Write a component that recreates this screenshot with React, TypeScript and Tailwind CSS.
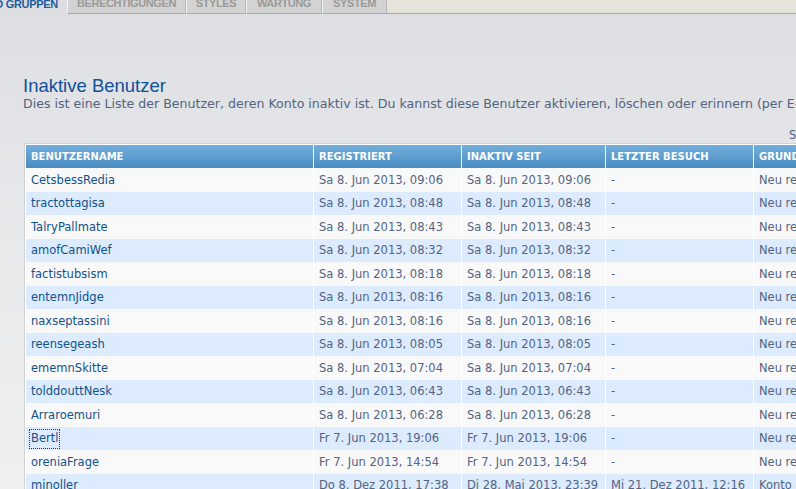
import React from "react";

type Row = {
  name: string;
  registered: string;
  inactive: string;
  lastVisit: string;
  reason: string;
};

const rows: Row[] = [
  { name: "CetsbessRedia", registered: "Sa 8. Jun 2013, 09:06", inactive: "Sa 8. Jun 2013, 09:06", lastVisit: "-", reason: "Neu registriert" },
  { name: "tractottagisa", registered: "Sa 8. Jun 2013, 08:48", inactive: "Sa 8. Jun 2013, 08:48", lastVisit: "-", reason: "Neu registriert" },
  { name: "TalryPallmate", registered: "Sa 8. Jun 2013, 08:43", inactive: "Sa 8. Jun 2013, 08:43", lastVisit: "-", reason: "Neu registriert" },
  { name: "amofCamiWef", registered: "Sa 8. Jun 2013, 08:32", inactive: "Sa 8. Jun 2013, 08:32", lastVisit: "-", reason: "Neu registriert" },
  { name: "factistubsism", registered: "Sa 8. Jun 2013, 08:18", inactive: "Sa 8. Jun 2013, 08:18", lastVisit: "-", reason: "Neu registriert" },
  { name: "entemnJidge", registered: "Sa 8. Jun 2013, 08:16", inactive: "Sa 8. Jun 2013, 08:16", lastVisit: "-", reason: "Neu registriert" },
  { name: "naxseptassini", registered: "Sa 8. Jun 2013, 08:16", inactive: "Sa 8. Jun 2013, 08:16", lastVisit: "-", reason: "Neu registriert" },
  { name: "reensegeash", registered: "Sa 8. Jun 2013, 08:05", inactive: "Sa 8. Jun 2013, 08:05", lastVisit: "-", reason: "Neu registriert" },
  { name: "ememnSkitte", registered: "Sa 8. Jun 2013, 07:04", inactive: "Sa 8. Jun 2013, 07:04", lastVisit: "-", reason: "Neu registriert" },
  { name: "tolddouttNesk", registered: "Sa 8. Jun 2013, 06:43", inactive: "Sa 8. Jun 2013, 06:43", lastVisit: "-", reason: "Neu registriert" },
  { name: "Arraroemuri", registered: "Sa 8. Jun 2013, 06:28", inactive: "Sa 8. Jun 2013, 06:28", lastVisit: "-", reason: "Neu registriert" },
  { name: "Bertl", registered: "Fr 7. Jun 2013, 19:06", inactive: "Fr 7. Jun 2013, 19:06", lastVisit: "-", reason: "Neu registriert" },
  { name: "oreniaFrage", registered: "Fr 7. Jun 2013, 14:54", inactive: "Fr 7. Jun 2013, 14:54", lastVisit: "-", reason: "Neu registriert" },
  { name: "minoller", registered: "Do 8. Dez 2011, 17:38", inactive: "Di 28. Mai 2013, 23:39", lastVisit: "Mi 21. Dez 2011, 12:16", reason: "Konto deaktiviert" },
];

const tabs = [
  { label: "BERECHTIGUNGEN", w: "w-[119px]" },
  { label: "STYLES", w: "w-[60px]" },
  { label: "WARTUNG", w: "w-[76px]" },
  { label: "SYSTEM", w: "w-[65px]" },
];

const tabFont = { fontFamily: '"Liberation Sans", Arial, sans-serif' };

function Tabs() {
  return (
    <div className="flex h-[14px] bg-[#e6e4da]" style={tabFont}>
      <div className="flex h-[14px] w-[67px] items-end justify-end overflow-hidden bg-[#dcdee2] pr-[9px]">
        <span className="whitespace-nowrap pb-[4px] text-[11px] font-bold leading-none tracking-[-0.3px] text-[#1d5d9b]">
          BENUTZER UND GRUPPEN
        </span>
      </div>
      {tabs.map((t) => (
        <div
          key={t.label}
          className={`flex h-[14px] items-end justify-center border-b border-l border-r border-b-[#a9a9a9] border-l-[#f2f2f2] border-r-[#b5b5b5] bg-[#d3d3d3] ${t.w}`}
        >
          <span className="pb-[4px] text-[11px] font-bold leading-none tracking-[-0.4px] text-[#9a9a9a]">
            {t.label}
          </span>
        </div>
      ))}
      <div className="flex-1 border-b border-b-[#a9a9a9]" />
    </div>
  );
}

function UserTable() {
  const cell = "border-r border-white px-[5px] whitespace-nowrap";
  return (
    <div className="ml-[24px] w-[900px] border border-[#d2d2d2] bg-white p-px">
      <div className="flex h-[23px] items-center bg-gradient-to-b from-[#72afdc] to-[#4a8cc2] text-[10px] font-bold text-white">
        <div className={`${cell} flex h-full w-[288px] items-center pl-[5px]`}>BENUTZERNAME</div>
        <div className={`${cell} flex h-full w-[148px] items-center`}>REGISTRIERT</div>
        <div className={`${cell} flex h-full w-[144px] items-center`}>INAKTIV SEIT</div>
        <div className={`${cell} flex h-full w-[148px] items-center`}>LETZTER BESUCH</div>
        <div className={`${cell} flex h-full flex-1 items-center`}>GRUND</div>
      </div>
      {rows.map((r, i) => (
        <div
          key={r.name}
          className={`flex items-center pt-px text-[11.5px] text-[#536482] ${
            i % 2 === 0 ? "h-[24px] bg-[#f9f9f9]" : "h-[23px] bg-[#dcebfe]"
          }`}
        >
          <div className={`${cell} flex h-full w-[288px] items-center pl-[4px]`}>
            <span
              className={`text-[#105289] ${
                r.name === "Bertl" ? "outline-1 outline-dotted outline-[#333] px-px" : "px-px"
              }`}
            >
              {r.name}
            </span>
          </div>
          <div className={`${cell} flex h-full w-[148px] items-center`}>{r.registered}</div>
          <div className={`${cell} flex h-full w-[144px] items-center`}>{r.inactive}</div>
          <div className={`${cell} flex h-full w-[148px] items-center`}>{r.lastVisit}</div>
          <div className={`${cell} flex h-full flex-1 items-center`}>{r.reason}</div>
        </div>
      ))}
    </div>
  );
}

export default function App() {
  return (
    <div
      className="h-[489px] w-[796px] overflow-hidden bg-gradient-to-b from-[#dcdee2] via-[#e8e9eb] to-[#efefef]"
      style={{ fontFamily: '"DejaVu Sans", Verdana, sans-serif' }}
    >
      <Tabs />
      <div className="pt-[61px]">
        <h1
          className="pl-[23px] text-[18.5px] font-normal leading-[21px] text-[#115098]"
          style={{ fontFamily: '"Liberation Sans", Arial, sans-serif' }}
        >
          Inaktive Benutzer
        </h1>
        <p className="whitespace-nowrap pl-[23px] text-[12.6px] leading-[16px] text-[#536482]">
          Dies ist eine Liste der Benutzer, deren Konto inaktiv ist. Du kannst diese Benutzer aktivieren, löschen oder erinnern (per E-Mail), wenn du dies wünschst.
        </p>
        <div className="mt-[16px] flex h-[14px] justify-end overflow-hidden">
          <span className="translate-x-[100%] whitespace-nowrap text-[11.5px] leading-[14px] text-[#536482]">
            <span className="-ml-[7px]">S</span>
          </span>
        </div>
        <div className="mt-px">
          <UserTable />
        </div>
      </div>
    </div>
  );
}
